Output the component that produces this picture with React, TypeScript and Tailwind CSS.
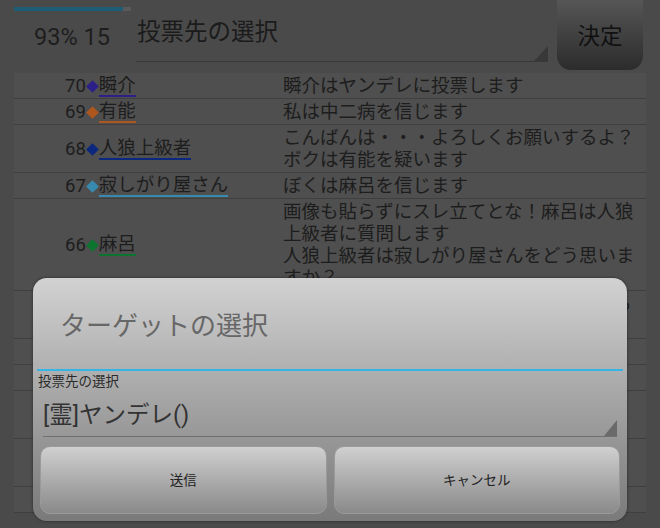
import React from 'react'

type Row = { n: number; name: string; color: string; msg: string[] }

const rows: Row[] = [
  { n: 70, name: '瞬介', color: '#2c2088', msg: ['瞬介はヤンデレに投票します'] },
  { n: 69, name: '有能', color: '#ad561d', msg: ['私は中二病を信じます'] },
  { n: 68, name: '人狼上級者', color: '#0c277e', msg: ['こんばんは・・・よろしくお願いするよ？', 'ボクは有能を疑います'] },
  { n: 67, name: '寂しがり屋さん', color: '#3889b0', msg: ['ぼくは麻呂を信じます'] },
  {
    n: 66,
    name: '麻呂',
    color: '#0d7430',
    msg: ['画像も貼らずにスレ立てとな！麻呂は人狼上級者に質問します', '人狼上級者は寂しがり屋さんをどう思いますか？'],
  },
  { n: 65, name: 'ヤンデレ', color: '#7a1f6e', msg: ['みんなのこと、ずっと見守っていてあげるからね。'] },
  { n: 64, name: '中二病', color: '#8a1f1f', msg: ['我は瞬介を信じよう'] },
  { n: 63, name: '有能', color: '#ad561d', msg: ['占い結果は明日出します'] },
  { n: 62, name: '瞬介', color: '#2c2088', msg: ['とりあえず様子見かな・・・', 'みんなの発言を見てから決めます'] },
  { n: 61, name: '人狼上級者', color: '#0c277e', msg: ['寂しがり屋さんは白っぽいかな・・・', 'ヤンデレは少し怪しいと思うよ・・・'] },
  { n: 60, name: 'ヤンデレ', color: '#6b1a7c', msg: ['わたしはずっと麻呂さんの味方ですよ'] },
]

function Diamond({ color }: { color: string }) {
  return <span className="inline-block w-[9px] h-[9px] rotate-45 mx-[2px]" style={{ backgroundColor: color }} />
}

export default function App() {
  return (
    <div className="relative w-[660px] h-[528px] overflow-hidden bg-[#4a4a4a] font-[Roboto,'Noto_Sans_CJK_JP',sans-serif] select-none">
      {/* header */}
      <div className="flex h-[73px]">
        <div className="w-[136px] pl-[14px] pt-[7px] flex flex-col">
          <div className="w-[117px] h-[4px] bg-[#5a5a5a]">
            <div className="h-full w-[93%] bg-[#1d5d76]" />
          </div>
          <div className="mt-[13px] pl-[20px] text-[23.5px] leading-[26px] text-[#1e1e1e]">93% 15</div>
        </div>
        <div className="relative w-[412px] h-[62px] border-b border-[#3a3a3a] pt-[18px] pl-[1px]">
          <span className="text-[23.5px] leading-[28px] text-[#1b1b1b]">投票先の選択</span>
          <svg className="absolute right-0 bottom-0" width="14" height="15" viewBox="0 0 14 15">
            <polygon points="14,0 14,15 0,15" fill="#383838" />
          </svg>
        </div>
        <div className="ml-[9px] w-[86px] h-[70px] rounded-b-[14px] bg-gradient-to-b from-[#565656] to-[#2c2c2c] flex items-center justify-center pt-[3px]">
          <span className="text-[22.5px] text-[#111]">決定</span>
        </div>
      </div>

      {/* posts table */}
      <div className="ml-[14px] w-[632px] bg-[#4f4f4f] text-[18.5px] leading-[22px] text-[#1d1d1d]">
        {rows.map((r) => (
          <div key={r.n} className="flex border-b border-[#3f3f3f] pt-[2px] pb-[1px]">
            <div className="w-[269px] pl-[51px] flex items-center">
              <span>{r.n}</span>
              <Diamond color={r.color} />
              <span className="inline-block leading-[20px] border-b-2" style={{ borderColor: r.color }}>
                {r.name}
              </span>
            </div>
            <div className="w-[362px]">
              {r.msg.map((m, i) => (
                <div key={i}>{m}</div>
              ))}
            </div>
          </div>
        ))}
      </div>

      {/* dialog */}
      <div className="absolute left-[33px] top-[278px] w-[594px] h-[243px] rounded-[14px] bg-gradient-to-b from-[#d2d2d2] to-[#7a7a7a] shadow-[0_0_3px_rgba(0,0,0,0.5)] flex flex-col">
        <div className="h-[91px] pl-[27px] pt-[32px] text-[26px] leading-[32px] text-[#676767]">ターゲットの選択</div>
        <div className="mx-[4px] h-[2px] bg-[#33b5e5]" />
        <div className="pl-[5px] text-[13.5px] leading-[20px] text-[#2a2a2a]">投票先の選択</div>
        <div className="relative mx-[10px] h-[46px] border-b border-[#707070] pt-[10px]">
          <span className="text-[23.5px] leading-[28px] text-[#333]">[霊]ヤンデレ()</span>
          <svg className="absolute right-0 bottom-0" width="13" height="16" viewBox="0 0 13 16">
            <polygon points="13,0 13,16 0,16" fill="#6a6a6a" />
          </svg>
        </div>
        <div className="flex gap-[7px] px-[7px] mt-[9px]">
          <button className="flex-1 h-[68px] rounded-[10px] border border-[#9a9a9a] bg-gradient-to-b from-[#d0d0d0] to-[#8a8a8a] text-[13.5px] text-[#222]">
            送信
          </button>
          <button className="flex-1 h-[68px] rounded-[10px] border border-[#9a9a9a] bg-gradient-to-b from-[#d0d0d0] to-[#8a8a8a] text-[13.5px] text-[#222]">
            キャンセル
          </button>
        </div>
      </div>
    </div>
  )
}
